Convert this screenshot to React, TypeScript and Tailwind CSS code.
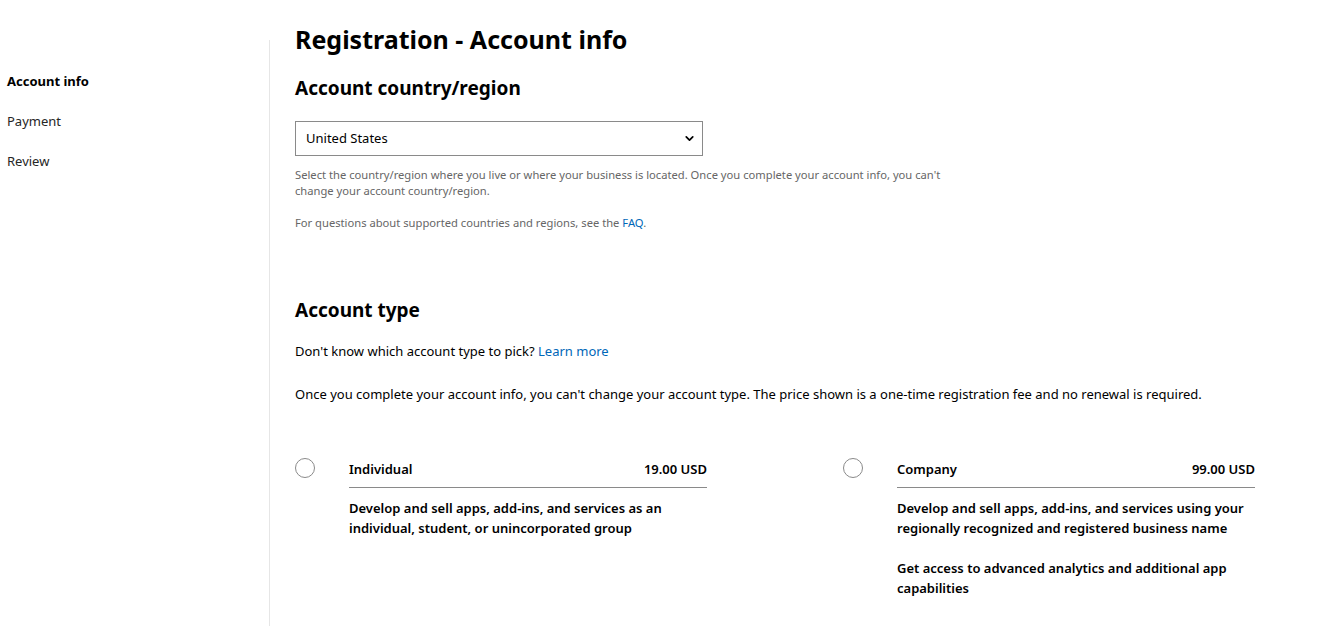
import { ChevronDown } from 'lucide-react'

const font = { fontFamily: '"Noto Sans", "Open Sans", sans-serif' }

function Plan({ name, price, lines }: { name: string; price: string; lines: string[] }) {
  return (
    <div className="flex w-[412px] items-start">
      <div className="mt-[-1px] h-5 w-5 shrink-0 rounded-full border border-[#8a8a8a] bg-white" />
      <div className="ml-[34px] flex-1">
        <div className="flex items-center justify-between border-b border-[#8a8a8a] pb-2 text-[13px] font-semibold leading-5 text-black">
          <span>{name}</span>
          <span>{price}</span>
        </div>
        <div className="mt-[10px] flex flex-col gap-5 text-[13px] font-semibold leading-5 text-black">
          {lines.map((l) => (
            <p key={l}>{l}</p>
          ))}
        </div>
      </div>
    </div>
  )
}

export default function App() {
  return (
    <div className="flex h-[626px] w-[1321px] bg-white text-black" style={font}>
      <aside className="w-[269px] shrink-0 pt-[71px] pl-[7px]">
        <nav className="flex flex-col gap-5 text-[13px] leading-5">
          <a className="font-bold text-black">Account info</a>
          <a className="text-[#262626]">Payment</a>
          <a className="text-[#262626]">Review</a>
        </nav>
      </aside>
      <div className="mt-10 w-px self-stretch bg-[#e6e6e6]" />
      <main className="flex-1 pl-[25px] pt-[21px]">
        <h1 className="text-[25px] font-bold leading-9">Registration - Account info</h1>
        <h2 className="mt-[17px] text-[19px] font-bold leading-7">Account country/region</h2>
        <div className="relative mt-[19px] flex h-[35px] w-[408px] items-center border border-[#8a8a8a] px-[10px] text-[13px]">
          <span>United States</span>
          <ChevronDown className="absolute right-[6px] top-[10px] h-[13px] w-[13px]" strokeWidth={3.2} />
        </div>
        <p className="mt-[11px] w-[670px] text-[11.2px] leading-4 text-[#666]">
          Select the country/region where you live or where your business is located. Once you complete your account info, you can't
          change your account country/region.
        </p>
        <p className="mt-4 text-[11.2px] leading-4 text-[#666]">
          For questions about supported countries and regions, see the <a className="text-[#0067b8]">FAQ</a>.
        </p>
        <h2 className="mt-[65px] text-[19px] font-bold leading-7">Account type</h2>
        <p className="mt-[17px] text-[13px] leading-5">
          Don't know which account type to pick? <a className="text-[#0067b8]">Learn more</a>
        </p>
        <p className="mt-[23px] text-[13px] leading-5">
          Once you complete your account info, you can't change your account type. The price shown is a one-time registration fee and no renewal is required.
        </p>
        <div className="mt-[55px] flex gap-[136px]">
          <Plan
            name="Individual"
            price="19.00 USD"
            lines={['Develop and sell apps, add-ins, and services as an individual, student, or unincorporated group']}
          />
          <Plan
            name="Company"
            price="99.00 USD"
            lines={[
              'Develop and sell apps, add-ins, and services using your regionally recognized and registered business name',
              'Get access to advanced analytics and additional app capabilities',
            ]}
          />
        </div>
      </main>
    </div>
  )
}
